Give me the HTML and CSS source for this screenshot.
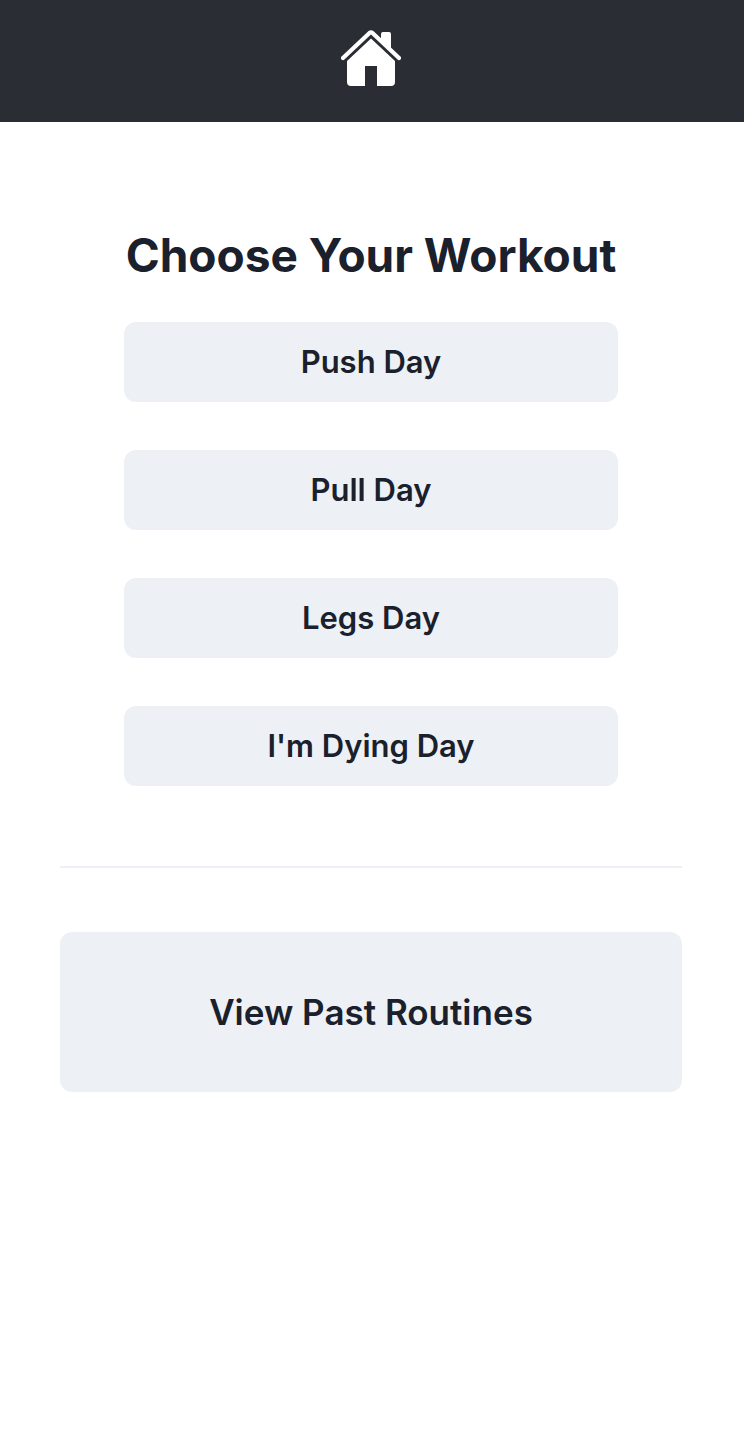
FILE: index.html
```html
<!DOCTYPE html>
<html lang="en">
<head>
<meta charset="utf-8">
<meta name="viewport" content="width=device-width, initial-scale=1">
<title>Choose Your Workout</title>
<link rel="stylesheet" href="styles.css">
</head>
<body>
<header class="topbar">
  <a class="home" href="#" aria-label="Home">
    <svg class="home-icon" viewBox="0 0 60 60" aria-hidden="true">
      <path d="M2 28 L28.500 3 Q30 1.800 31.500 3 L58 28" fill="none" stroke="#fff" stroke-width="4.200" stroke-linecap="round" stroke-linejoin="round"/>
      <path d="M40 11V4Q40 2 42 2H48Q50 2 50 4V21Z" fill="#fff"/>
      <path d="M30 8.500L54 31V52Q54 56 50 56H36V36H24V56H10Q6 56 6 52V31Z" fill="#fff"/>
    </svg>
  </a>
</header>
<main class="page">
  <section class="chooser">
    <h1 class="title">Choose Your Workout</h1>
    <div class="workouts">
      <button class="button" type="button">Push Day</button>
      <button class="button" type="button">Pull Day</button>
      <button class="button" type="button">Legs Day</button>
      <button class="button" type="button">I'm Dying Day</button>
    </div>
  </section>
  <hr class="divider">
  <button class="button button-large" type="button">View Past Routines</button>
</main>
</body>
</html>
```
FILE: styles.css
```css
* {
  box-sizing: border-box;
}

body {
  margin: 0;
  background: #fff;
  color: #1a202c;
  font-family: Inter, "Liberation Sans", sans-serif;
}

.topbar {
  display: flex;
  justify-content: center;
  padding: 30px 2px 32px 0;
  background: #2a2d34;
}

.home,
.home-icon {
  display: block;
  width: 60px;
  height: 60px;
}

.page {
  display: flex;
  flex-direction: column;
  padding: 104px 62px 64px 60px;
}

.chooser {
  align-self: center;
  width: 100%;
  max-width: 494px;
}

.title {
  margin: 0 0 38px;
  font-size: 46px;
  line-height: 58px;
  font-weight: 700;
  text-align: center;
}

.workouts {
  display: grid;
  gap: 48px;
}

.button {
  height: 80px;
  padding: 0 32px;
  border: 0;
  border-radius: 12px;
  background: #edf0f5;
  color: inherit;
  font: 600 31px/38px Inter, "Liberation Sans", sans-serif;
  cursor: pointer;
}

.divider {
  width: 100%;
  margin: 80px 0 64px;
  border: 0;
  border-top: 2px solid #edf0f4;
}

.button-large {
  height: 160px;
  font-size: 35px;
  line-height: 44px;
}
```
